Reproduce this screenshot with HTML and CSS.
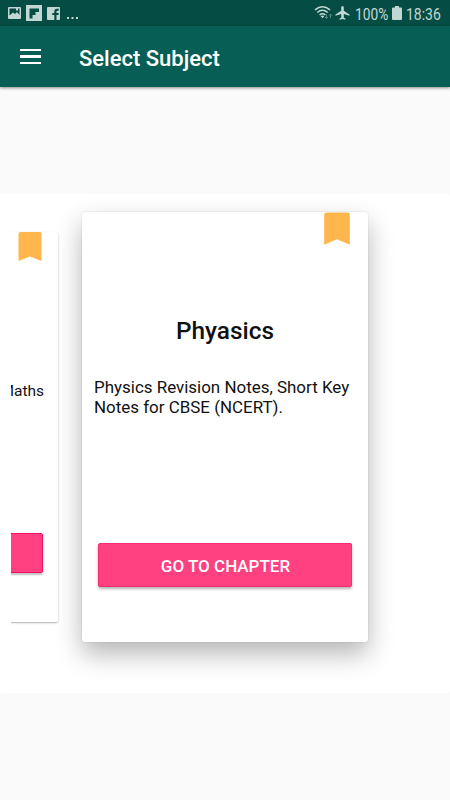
FILE: index.html
```html
<!DOCTYPE html>
<html lang="en">
<head>
<meta charset="utf-8">
<title>Select Subject</title>
<link rel="stylesheet" href="styles.css">
</head>
<body>
<div class="status">
  <svg class="notif" width="82" height="26" viewBox="0 0 82 26">
    <path fill="#c2d6d3" fill-rule="evenodd" d="M9 7h11q1 0 1 1v10q0 1-1 1H9q-1 0-1-1V8q0-1 1-1zM9.500 8.500v7l3.500-3 2 1.500 2-2 2.500 3V8.500h-1.500v2h-2v-2z"/>
    <path fill="#c2d6d3" fill-rule="evenodd" d="M26 5h16v16H26zM29.500 8.500v10h3v-3.500h3v-3h3.500v-3.500z"/>
    <path fill="#c2d6d3" fill-rule="evenodd" d="M48 7h11q1 0 1 1v11q0 1-1 1h-2.500v-5h2l.3-2h-2.300v-1.300q0-1 1-1h1.300V8.800h-2q-2.500 0-2.500 2.700V13h-2v2h2v5H48q-1 0-1-1V8q0-1 1-1z"/>
    <path fill="#c2d6d3" d="M67 17h2v2h-2zM71.500 17h2v2h-2zM76 17h2v2h-2z"/>
  </svg>
  <svg class="signals" width="37" height="26" viewBox="0 0 37 26">
    <g fill="none" stroke="#c2d6d3" stroke-width="1.600">
      <path d="M1 9.800Q8.500 3.800 16 9.800M3.300 12.500Q8.500 8 13.700 12.500M5.600 15Q8.500 12.500 11.400 15"/>
    </g>
    <path fill="#c2d6d3" d="M6.700 16.200q1.800-1.200 3.600 0l-1.800 2z"/>
    <path fill="none" stroke="#568781" d="M12.500 14.500v4M11 17l1.500 1.500L14 17M16.500 18v-4M15 15.500l1.500-1.500 1.500 1.500"/>
    <path fill="#c2d6d3" d="M28.500 6q1.300 0 1.300 1.500v3.300l5.700 3.600v1.400l-5.700-1.700v3.400l1.700 1.200v1.100l-3-.8-3 .8v-1.100l1.700-1.200v-3.400l-5.700 1.700v-1.400l5.700-3.600V7.500Q27.200 6 28.500 6z"/>
  </svg>
  <span class="percent">100%</span>
  <svg class="battery" width="10" height="14" viewBox="0 0 10 14"><path fill="#c2d6d3" d="M3 0h4v1.500h2q1 0 1 1V13q0 1-1 1H1q-1 0-1-1V2.500q0-1 1-1h2z"/></svg>
  <span class="clock">18:36</span>
</div>
<header class="appbar">
  <div class="menu"><i></i><i></i><i></i></div>
  <h1>Select Subject</h1>
</header>
<main class="panel">
  <section class="side">
    <div class="side-card">
      <svg class="mark" width="24" height="29" viewBox="0 0 24 29"><path fill="#ffb74d" d="M.5 29V2q0-2 2-2h19q2 0 2 2v27L12 24.500z"/></svg>
      <p class="side-text">Maths</p>
      <div class="side-button"></div>
    </div>
  </section>
  <section class="card">
    <svg class="mark" width="26" height="33" viewBox="0 0 26 33"><path fill="#ffb74d" d="M.2 32.800V2.500q0-2 2-2h21.600q2 0 2 2v30.300L13 27.300z"/></svg>
    <h2>Phyasics</h2>
    <p class="desc">Physics Revision Notes, Short Key<br>Notes for CBSE (NCERT).</p>
    <button class="go">GO TO CHAPTER</button>
  </section>
</main>
</body>
</html>
```
FILE: styles.css
```css
* { box-sizing: border-box; }
body {
  margin: 0;
  width: 450px;
  height: 800px;
  overflow: hidden;
  background: #fafafa;
  font-family: Roboto, "Liberation Sans", sans-serif;
  color: #111;
}
h1, h2, p { margin: 0; }
svg { display: block; flex: none; }
.status {
  display: flex;
  align-items: center;
  height: 26px;
  background: #054d44;
  color: #c2d6d3;
  font-size: 17px;
  line-height: 26px;
}
.signals { margin-left: 232px; }
.percent, .clock {
  flex: none;
  width: 34px;
  margin-left: 4px;
  padding-top: 2px;
  white-space: nowrap;
  transform: scaleX(.81);
  transform-origin: left center;
}
.battery { margin-left: 3px; }
.clock { margin-left: 4px; transform: scaleX(.82); }
.appbar {
  display: flex;
  align-items: center;
  height: 61px;
  padding-left: 20px;
  background: #075e54;
  box-shadow: 0 1px 3px rgba(0, 0, 0, .45);
}
.menu {
  display: grid;
  gap: 4px;
  width: 21px;
  margin-right: 38px;
}
.menu i { height: 2.400px; background: #fff; }
h1 {
  padding-top: 4px;
  color: #fff;
  font-size: 22px;
  font-weight: 500;
  line-height: 28px;
  white-space: nowrap;
}
.panel {
  display: flex;
  align-items: flex-start;
  height: 499px;
  margin-top: 107px;
  padding: 18px 0 0 11px;
  border-radius: 3px;
  background: #fff;
}
.side {
  display: flex;
  flex: none;
  justify-content: flex-end;
  width: 50px;
  height: 420px;
  padding: 20px 3px 0 0;
  margin-right: 21px;
  overflow: hidden;
}
.side-card {
  display: flex;
  flex-direction: column;
  align-items: flex-end;
  flex: none;
  width: 258px;
  height: 390px;
  padding-right: 15px;
  border-radius: 2px;
  background: #fff;
  box-shadow: 0 1px 2px rgba(0, 0, 0, .3);
}
.side-card .mark { margin-right: 1px; }
.side-text {
  margin: 120px -1px 0 0;
  font-size: 15.500px;
  line-height: 20px;
}
.side-button {
  width: 228px;
  height: 40px;
  margin-top: 132px;
  border: 1px solid #f50f69;
  border-radius: 2px;
  background: #ff4081;
  box-shadow: 0 2px 2px rgba(0, 0, 0, .25);
}
.card {
  display: flex;
  flex-direction: column;
  flex: none;
  width: 286px;
  height: 430px;
  border-radius: 3px;
  background: #fff;
  box-shadow: 0 12px 26px rgba(0, 0, 0, .29), 0 0 2px rgba(0, 0, 0, .12);
}
.card .mark { margin-left: 242px; }
h2 {
  margin-top: 70px;
  font-size: 24.400px;
  font-weight: 500;
  line-height: 32px;
  text-align: center;
}
.desc {
  margin: 31px 0 0 12px;
  font-size: 16.950px;
  line-height: 19.500px;
  white-space: nowrap;
}
.go {
  width: 254px;
  height: 44px;
  margin: 126px 0 0 16px;
  padding: 1px 0 0 1px;
  border: 1px solid #fa2c76;
  border-radius: 2px;
  background: #ff4081;
  color: #fff;
  font: 500 17px/20px Roboto, "Liberation Sans", sans-serif;
  box-shadow: 0 2px 3px rgba(0, 0, 0, .3);
}
```
